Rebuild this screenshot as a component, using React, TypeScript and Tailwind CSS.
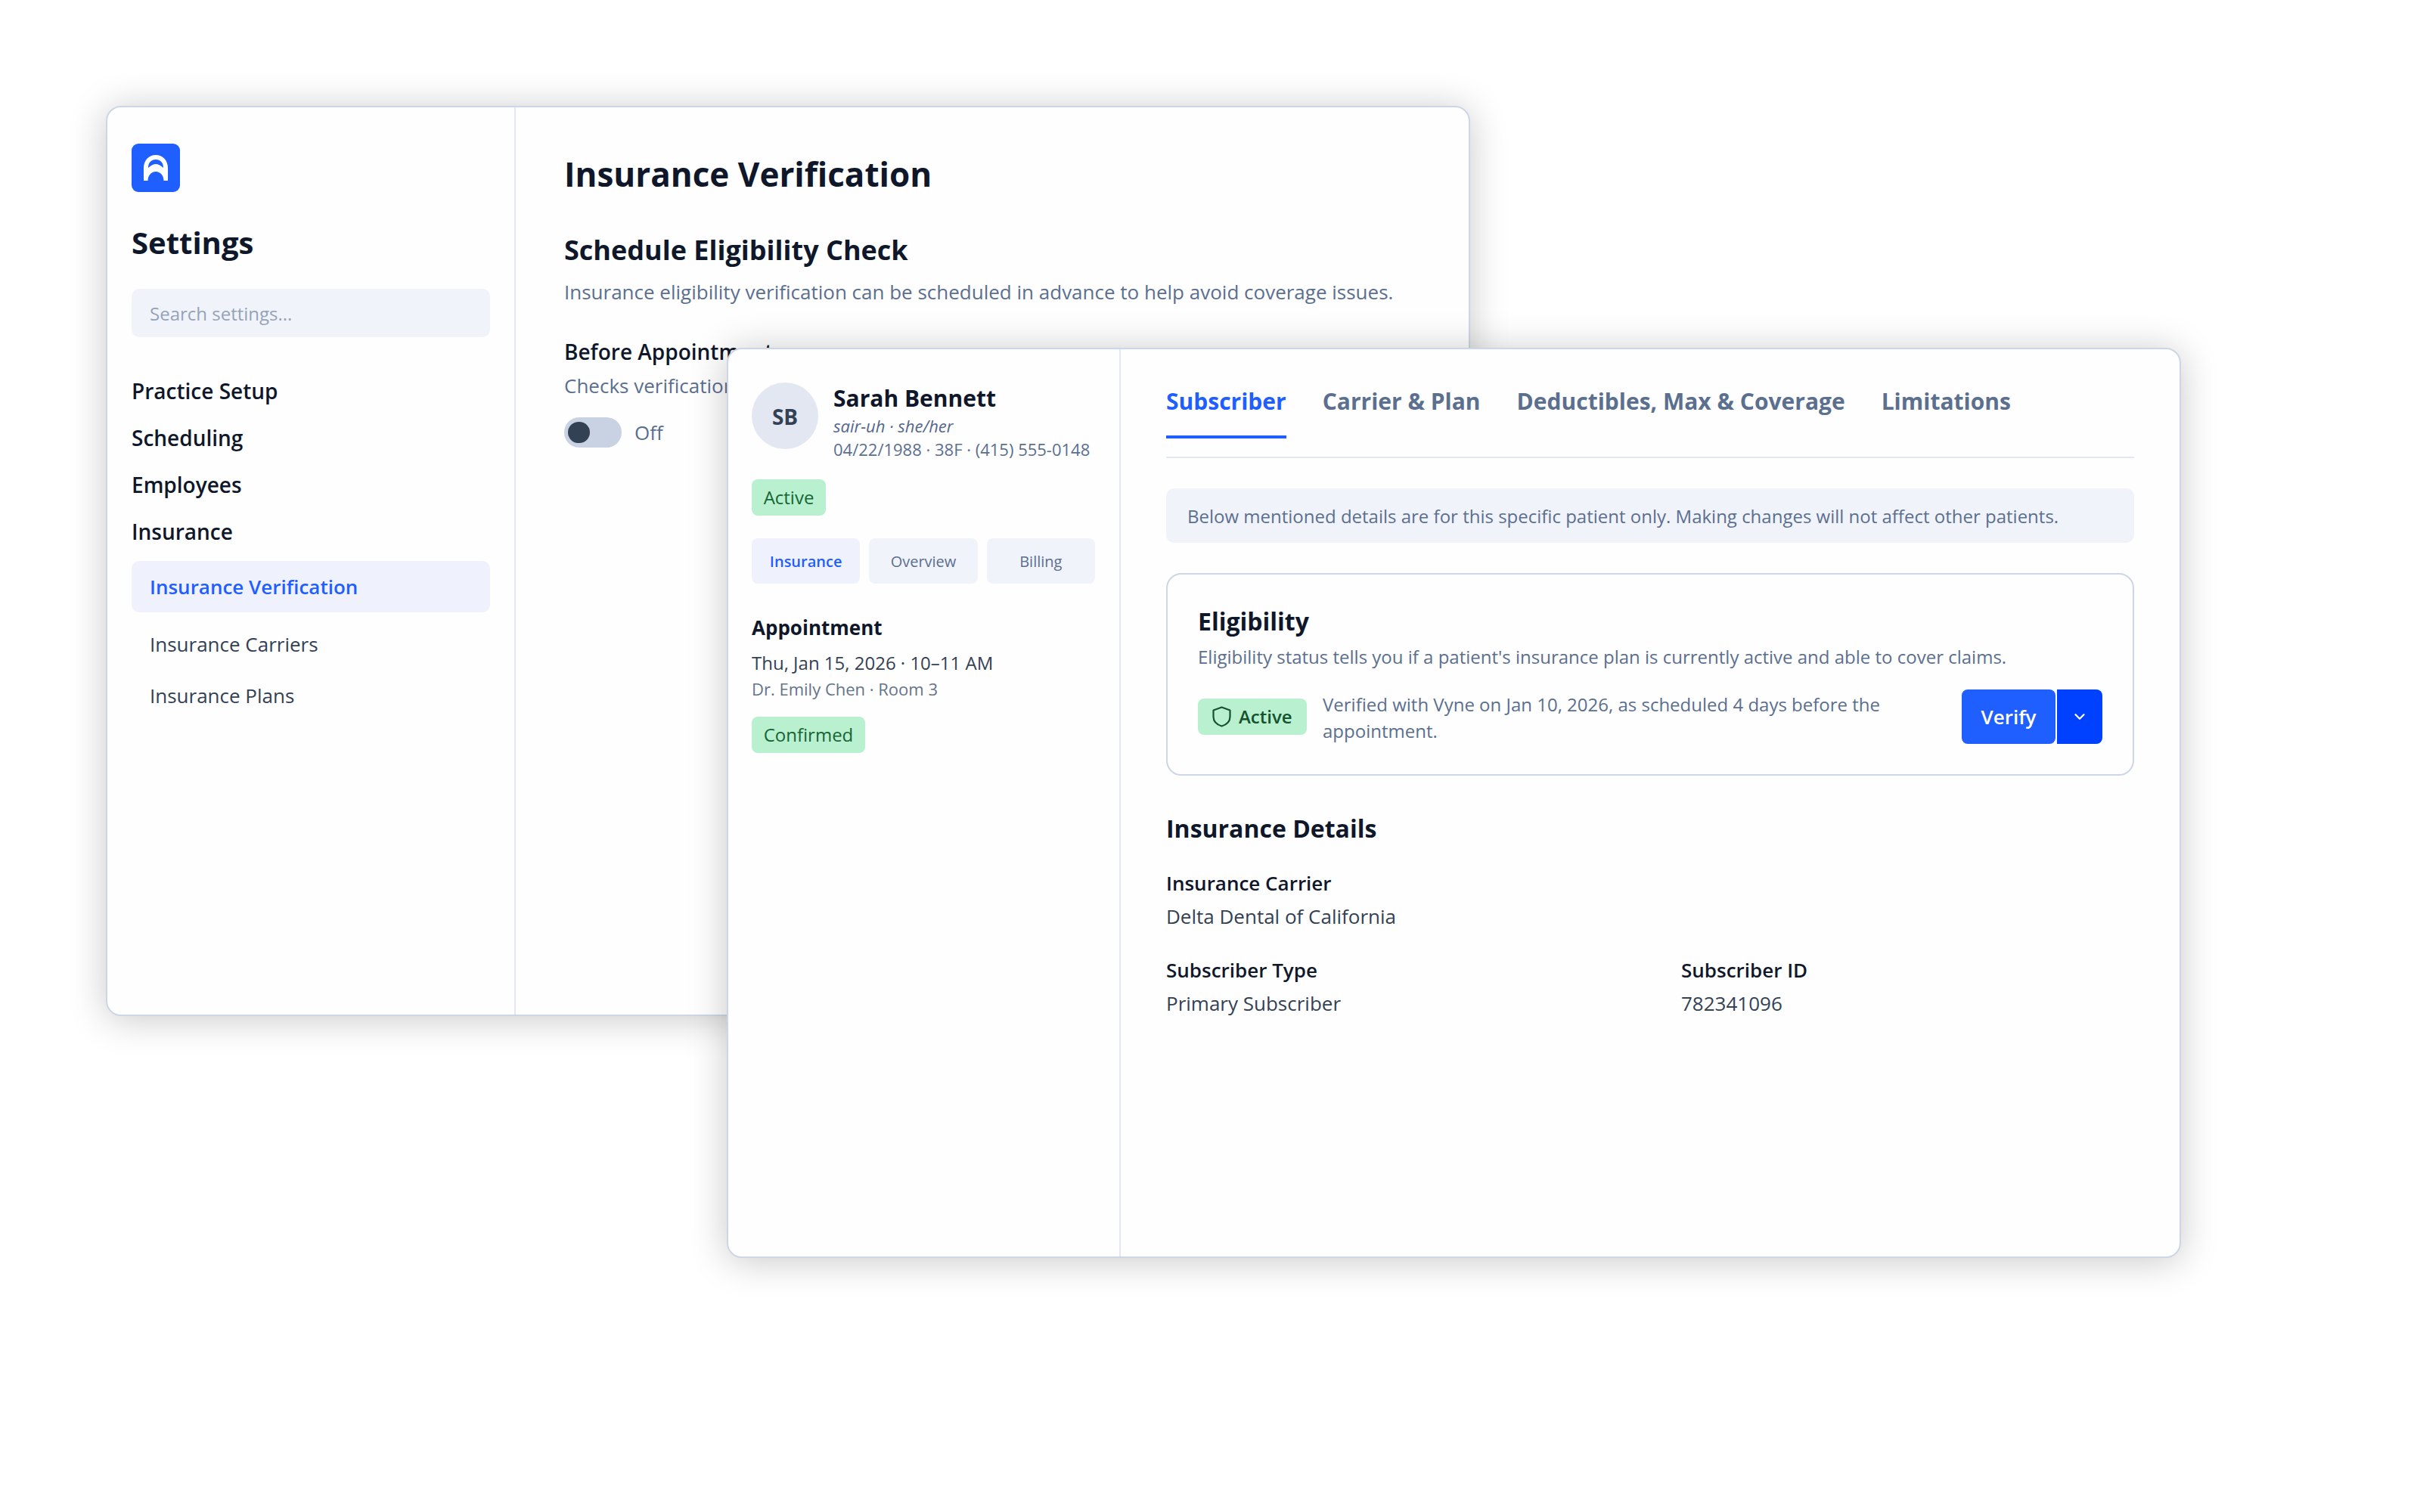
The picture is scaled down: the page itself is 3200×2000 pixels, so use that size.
import { ChevronDown } from "lucide-react";

const navItems = ["Practice Setup", "Scheduling", "Employees", "Insurance"];
const tabs = ["Carrier & Plan", "Deductibles, Max & Coverage", "Limitations"];

function Logo() {
  return (
    <svg viewBox="0 0 64 64" className="block h-[64px] w-[64px]">
      <rect width="64" height="64" rx="9" fill="#1f5eff" />
      <path
        fillRule="evenodd"
        fill="#fff"
        d="M16 49V32C16 22 23 15 32 15C41 15 48 22 48 32V49H42.5C42.5 42 38 37 32 37C26 37 21.500 42 21.500 49ZM22 32C26 28.500 29 27 32 27C35 27 38 28.500 42 32C42 25 38 21 32 21C26 21 22 25 22 32Z"
      />
    </svg>
  );
}

function Field({ label, value }: { label: string; value: string }) {
  return (
    <div>
      <div className="text-[26px] leading-[40px] font-semibold text-[#0f172a]">{label}</div>
      <div className="mt-[4px] text-[26px] leading-[40px] text-[#334155]">{value}</div>
    </div>
  );
}

function SettingsWindow() {
  return (
    <div className="absolute left-[140px] top-[140px] flex h-[1204px] w-[1804px] rounded-[20px] border-2 border-[#cdd6e6] bg-[#fefefe] shadow-[0_4px_50px_rgba(0,0,0,0.22)]">
      <aside className="w-[540px] shrink-0 border-r-2 border-[#e2e8f3] px-[32px] pt-[48px]">
        <Logo />
        <h2 className="mt-[39px] text-[40px] leading-[56px] font-bold text-[#0f172a]">Settings</h2>
        <div className="mt-[33px] flex h-[64px] items-center rounded-[10px] bg-[#f1f3fb] px-[24px] pt-[1px] text-[24px] text-[#94a3b8]">
          Search settings...
        </div>
        <nav className="mt-[40px]">
          {navItems.map((item) => (
            <div key={item} className="text-[28px] leading-[62px] font-semibold text-[#0f172a]">
              {item}
            </div>
          ))}
          <div className="mt-[8px] flex h-[68px] items-center rounded-[10px] bg-[#eff2fd] px-[24px] text-[26px] font-semibold text-[#1f5eff]">
            Insurance Verification
          </div>
          <div className="mt-[8px] px-[24px] text-[26px] leading-[68px] text-[#334155]">Insurance Carriers</div>
          <div className="px-[24px] text-[26px] leading-[68px] text-[#334155]">Insurance Plans</div>
        </nav>
      </aside>
      <main className="flex-1 pl-[64px] pt-[56px]">
        <h1 className="text-[44px] leading-[64px] font-bold text-[#0f172a]">Insurance Verification</h1>
        <h2 className="mt-[43px] text-[36px] leading-[52px] font-bold text-[#0f172a]">Schedule Eligibility Check</h2>
        <p className="mt-[9px] text-[26px] leading-[40px] text-[#5b6f8f]">
          Insurance eligibility verification can be scheduled in advance to help avoid coverage issues.
        </p>
        <div className="mt-[39px] text-[28px] leading-[40px] font-semibold text-[#0f172a]">Before Appointment</div>
        <div className="mt-[7px] text-[26px] leading-[36px] text-[#5b6f8f]">Checks verification before the visit</div>
        <div className="mt-[24px] flex items-center gap-[17px]">
          <div className="flex h-[40px] w-[76px] items-center rounded-full bg-[#c8d2e3] pl-[5px]">
            <div className="h-[28px] w-[29px] rounded-full bg-[#334155]" />
          </div>
          <span className="text-[26px] text-[#5b6f8f]">Off</span>
        </div>
      </main>
    </div>
  );
}

function PatientPane() {
  return (
    <aside className="w-[519px] shrink-0 border-r-2 border-[#e2e8f3] pl-[31px] pr-[32px] pt-[44px]">
      <div className="flex items-start gap-[20px]">
        <div className="flex h-[88px] w-[88px] shrink-0 items-center justify-center rounded-full bg-[#e2e7f2] pt-[2px] text-[28px] font-bold text-[#334155]">
          SB
        </div>
        <div className="mt-[1px]">
          <div className="text-[30px] leading-[40px] font-bold text-[#0f172a]">Sarah Bennett</div>
          <div className="text-[22px] leading-[32px] italic text-[#54678a]">sair-uh · she/her</div>
          <div className="mt-[1px] text-[22px] leading-[28px] text-[#5b6f8f] whitespace-nowrap">04/22/1988 · 38F · (415) 555-0148</div>
        </div>
      </div>
      <div className="mt-[26px] flex h-[48px] w-[98px] items-center justify-center rounded-[8px] bg-[#b8f0d0] text-[24px] text-[#166534]">
        Active
      </div>
      <div className="mt-[30px] flex gap-[12px]">
        <div className="flex h-[60px] flex-1 items-center justify-center rounded-[8px] bg-[#eff2fd] pt-[1px] text-[20px] font-semibold text-[#1f5eff]">Insurance</div>
        <div className="flex h-[60px] flex-1 items-center justify-center rounded-[8px] bg-[#f1f3fb] pt-[1px] text-[20px] text-[#5b6f8f]">Overview</div>
        <div className="flex h-[60px] flex-1 items-center justify-center rounded-[8px] bg-[#f1f3fb] pt-[1px] text-[20px] text-[#5b6f8f]">Billing</div>
      </div>
      <div className="mt-[38px] text-[26px] leading-[40px] font-bold text-[#0f172a]">Appointment</div>
      <div className="mt-[9px] text-[24px] leading-[36px] text-[#334155]">Thu, Jan 15, 2026 · 10–11 AM</div>
      <div className="leading-[33px] text-[22px] text-[#64748b]">Dr. Emily Chen · Room 3</div>
      <div className="mt-[20px] flex h-[48px] w-[150px] items-center justify-center rounded-[8px] bg-[#b8f0d0] pb-[1px] text-[24px] text-[#166534]">
        Confirmed
      </div>
    </aside>
  );
}

function Shield() {
  return (
    <svg viewBox="0 0 25 28" fill="none" stroke="#14532d" strokeWidth="2.2" strokeLinejoin="round" className="h-[28px] w-[25px] shrink-0">
      <path d="M12.500 1.500L23.500 5.500V14C23.500 20 19 24.500 12.500 26.500C6 24.500 1.500 20 1.500 14V5.500Z" />
    </svg>
  );
}

function EligibilityCard() {
  return (
    <section className="mt-[40px] h-[268px] rounded-[20px] border-2 border-[#cdd6e6] pl-[40px] pr-[40px] pt-[40px]">
      <h3 className="text-[32px] leading-[44px] font-bold text-[#0f172a]">Eligibility</h3>
      <p className="mt-[7px] text-[24px] leading-[36px] text-[#5b6f8f]">
        Eligibility status tells you if a patient's insurance plan is currently active and able to cover claims.
      </p>
      <div className="mt-[25px] flex items-center">
        <div className="flex h-[48px] w-[144px] shrink-0 items-center gap-[10px] rounded-[8px] bg-[#b8f0d0] pl-[19px] text-[24px] font-semibold text-[#14532d]">
          <Shield />
          Active
        </div>
        <p className="ml-[21px] w-[800px] pt-[2px] text-[24px] leading-[35px] text-[#5b6f8f]">
          Verified with Vyne on Jan 10, 2026, as scheduled 4 days before the appointment.
        </p>
        <div className="ml-auto flex gap-[2px]">
          <button className="flex h-[72px] w-[124px] items-center justify-center rounded-[8px] bg-[#1f5eff] text-[26px] font-semibold text-white">
            Verify
          </button>
          <button className="flex h-[72px] w-[60px] items-center justify-center rounded-r-[8px] bg-[#0040ff] text-white">
            <ChevronDown size={22} strokeWidth={2.5} />
          </button>
        </div>
      </div>
    </section>
  );
}

function SubscriberPane() {
  return (
    <main className="flex-1 px-[60px] pt-[47px]">
      <div className="flex gap-[48px] border-b-2 border-[#e2e8f3] pb-[24px]">
        <div className="border-b-4 border-[#1f5eff] pb-[23px] text-[30px] leading-[44px] font-bold text-[#1f5eff]">Subscriber</div>
        {tabs.map((tab) => (
          <div key={tab} className="pb-[27px] text-[30px] leading-[44px] font-bold text-[#5b6f8f]">
            {tab}
          </div>
        ))}
      </div>
      <div className="mt-[40px] flex h-[72px] items-center rounded-[10px] bg-[#f1f3fb] px-[28px] pt-[1px] text-[24px] text-[#5b6f8f]">
        Below mentioned details are for this specific patient only. Making changes will not affect other patients.
      </div>
      <EligibilityCard />
      <h3 className="mt-[48px] text-[32px] leading-[44px] font-bold text-[#0f172a]">Insurance Details</h3>
      <div className="mt-[30px]">
        <Field label="Insurance Carrier" value="Delta Dental of California" />
      </div>
      <div className="mt-[31px] grid grid-cols-2 gap-x-[82px]">
        <Field label="Subscriber Type" value="Primary Subscriber" />
        <Field label="Subscriber ID" value="782341096" />
      </div>
    </main>
  );
}

export default function App() {
  return (
    <div className="relative h-[2000px] w-[3200px] overflow-hidden bg-white font-['Open_Sans',sans-serif]">
      <SettingsWindow />
      <div className="absolute left-[961px] top-[460px] flex h-[1204px] w-[1923px] rounded-[20px] border-2 border-[#cdd6e6] bg-[#fefefe] shadow-[0_4px_50px_rgba(0,0,0,0.22)]">
        <PatientPane />
        <SubscriberPane />
      </div>
    </div>
  );
}
